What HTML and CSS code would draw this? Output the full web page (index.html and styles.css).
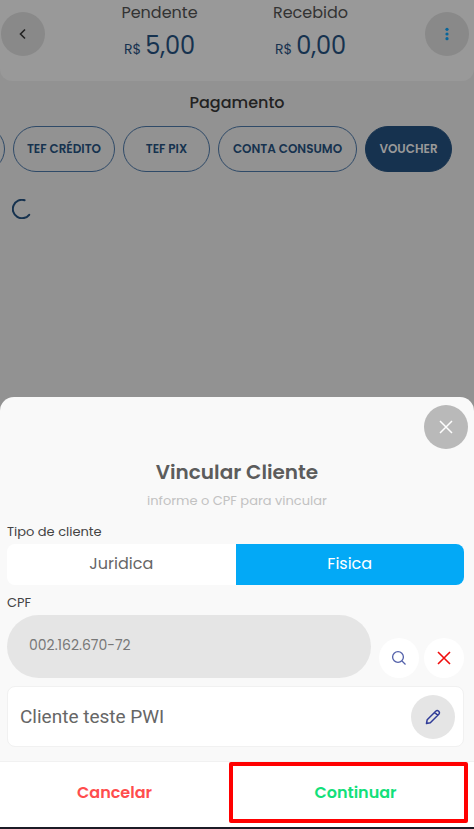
FILE: index.html
```html
<!DOCTYPE html>
<html lang="pt-BR">
<head>
<meta charset="utf-8">
<meta name="viewport" content="width=device-width, initial-scale=1">
<title>Pagamento</title>
<link rel="stylesheet" href="styles.css">
</head>
<body>
<div class="app">
  <header class="topbar">
    <button class="round topbar-btn" type="button" aria-label="Voltar">
      <svg width="16" height="16" viewBox="0 0 16 16" fill="none" stroke="#222" stroke-width="1.6"><path d="M10 3.5 5.5 8l4.5 4.5"/></svg>
    </button>
    <div class="totals">
      <div class="total"><span class="total-name">Pendente</span><span class="total-value"><small>R$</small>5,00</span></div>
      <div class="total"><span class="total-name">Recebido</span><span class="total-value"><small>R$</small>0,00</span></div>
    </div>
    <button class="round topbar-btn" type="button" aria-label="Mais">
      <svg width="16" height="16" viewBox="0 0 16 16" fill="#08659a"><circle cx="8" cy="3.3" r="1.6"/><circle cx="8" cy="8" r="1.6"/><circle cx="8" cy="12.7" r="1.6"/></svg>
    </button>
  </header>
  <main class="payment">
    <h1 class="payment-title">Pagamento</h1>
    <div class="methods">
      <span class="method method-cut" aria-hidden="true"></span>
      <button class="method method-m" type="button">TEF CRÉDITO</button>
      <button class="method method-s" type="button">TEF PIX</button>
      <button class="method method-l" type="button">CONTA CONSUMO</button>
      <button class="method method-s method-on" type="button">VOUCHER</button>
    </div>
    <svg class="spinner" width="20" height="20" viewBox="0 0 20 20" fill="none" stroke="#16324f" stroke-width="2" stroke-linecap="round"><path d="M12.6 1.2A9.2 9.2 0 1 0 17.2 15.8"/></svg>
  </main>
  <section class="sheet" role="dialog" aria-labelledby="sheet-title">
    <div class="sheet-top">
      <button class="round close" type="button" aria-label="Fechar">
        <svg width="16" height="16" viewBox="0 0 16 16" fill="none" stroke="#fff" stroke-width="1.5"><path d="m2 2 12 12M14 2 2 14"/></svg>
      </button>
    </div>
    <h2 class="sheet-title" id="sheet-title">Vincular Cliente</h2>
    <p class="sheet-hint">informe o CPF para vincular</p>
    <div class="form">
      <span class="label" id="type-label">Tipo de cliente</span>
      <div class="segments" role="group" aria-labelledby="type-label">
        <button class="segment" type="button" aria-pressed="false">Juridica</button>
        <button class="segment segment-on" type="button" aria-pressed="true">Fisica</button>
      </div>
      <label class="label" for="cpf">CPF</label>
      <div class="cpf-row">
        <input class="cpf" id="cpf" type="text" value="002.162.670-72">
        <button class="round action" type="button" aria-label="Buscar">
          <svg width="16" height="16" viewBox="0 0 16 16" fill="none" stroke="#5361aa" stroke-width="1.3"><circle cx="7" cy="7" r="5.4"/><path d="m11 11 3.5 3.5"/></svg>
        </button>
        <button class="round action" type="button" aria-label="Limpar">
          <svg width="16" height="16" viewBox="0 0 16 16" fill="none" stroke="#f00d0d" stroke-width="1.6"><path d="m2 2 12 12M14 2 2 14"/></svg>
        </button>
      </div>
      <div class="client">
        <span class="client-name">Cliente teste PWI</span>
        <button class="round edit" type="button" aria-label="Editar">
          <svg width="16" height="16" viewBox="0 0 16 16" fill="none" stroke="#303c98" stroke-width="1.5" stroke-linejoin="round"><path d="M1.5 14.5 2.2 10.7 10.7 2.2A2.2 2.2 0 0 1 13.8 5.3L5.3 13.8ZM9.6 3.3 12.7 6.4"/></svg>
        </button>
      </div>
    </div>
    <footer class="footer">
      <button class="choice cancel" type="button">Cancelar</button>
      <button class="choice continue" type="button">Continuar</button>
    </footer>
  </section>
</div>
</body>
</html>
```

FILE: styles.css
```css
* { box-sizing: border-box; }
body { margin: 0; font-family: Poppins, Inter, sans-serif; background: #929292; }
button, input { font: inherit; border: 0; margin: 0; padding: 0; }
h1, h2, p { margin: 0; }
svg { display: block; }

.app { min-height: 100vh; display: flex; flex-direction: column; }
.round { display: grid; place-items: center; flex: none; width: 44px; height: 44px; border-radius: 50%; }

.topbar { display: flex; align-items: flex-start; height: 81px; padding: 0 5px 0 1px; background: #999; border-radius: 0 0 12px 12px; }
.topbar-btn { margin-top: 12px; background: #898989; }
.totals { flex: 1; display: flex; justify-content: center; }
.total { display: flex; flex-direction: column; align-items: center; width: 151px; }
.total-name { font-size: 16px; line-height: 26px; color: #333; }
.total-value { display: flex; align-items: baseline; gap: 4px; font-size: 24px; line-height: 40px; color: #16324f; }
.total-value small { font-size: 14px; }

.payment { flex: 1; overflow: hidden; }
.payment-title { padding-top: 10px; font-size: 16px; line-height: 24px; font-weight: 500; text-align: center; color: #222; }
.methods { display: flex; justify-content: flex-end; gap: 8px; margin-top: 11px; padding-right: 22px; }
.method { flex: none; height: 46px; border: 1px solid #2f4a68; border-radius: 23px; background: none; color: #16324f; font-size: 12px; font-weight: 600; }
.method-cut { width: 60px; }
.method-s { width: 87px; }
.method-m { width: 102px; }
.method-l { width: 139px; }
.method-on { background: #16324f; border-color: #16324f; color: #999; }
.spinner { margin: 27px 0 0 12px; }

.sheet { background: #f9f9f9; border-radius: 14px 14px 0 0; border-bottom: 2px solid #1c1b26; }
.sheet-top { display: flex; justify-content: flex-end; padding: 8px 6px 0; }
.close { background: #b9b9b9; }
.sheet-title { margin-top: 8px; font-size: 20px; line-height: 30px; font-weight: 600; text-align: center; color: #5c5c5c; }
.sheet-hint { margin-top: 4px; font-size: 13px; line-height: 20px; text-align: center; color: #c2c2c2; }
.form { padding: 11px 10px 14px 7px; }
.label { display: block; font-size: 13px; line-height: 20px; color: #444; }
.segments { display: flex; height: 41px; margin: 2px 0 8px; border-radius: 8px; overflow: hidden; }
.segment { flex: 1; padding-bottom: 2px; background: #fff; color: #666; font-size: 16px; }
.segment-on { background: #03a9f6; color: #fff; }
.cpf-row { display: flex; align-items: flex-end; gap: 5px; margin-top: 2px; }
.cpf { flex: 1; min-width: 0; height: 63px; margin-right: 3px; padding: 0 22px 2px; border-radius: 32px; background: #e5e5e5; color: #777; font-size: 14px; }
.action { width: 40px; height: 40px; background: #fff; }
.client { display: flex; align-items: center; justify-content: space-between; height: 61px; margin-top: 8px; padding: 0 8px 0 12px; background: #fff; border: 1px solid #f1f1f1; border-radius: 8px; }
.client-name { font-family: Roboto, sans-serif; font-size: 19px; color: #666; }
.edit { background: #e5e5e5; }
.footer { display: grid; grid-template-columns: 229fr 239fr; height: 66px; padding: 0 6px 4px 0; background: #fff; border-top: 1px solid #f1f1f1; }
.choice { background: #fff; font-size: 16px; font-weight: 600; }
.cancel { color: #ff4d4d; }
.continue { padding-left: 14px; border: 4px solid #f00; border-radius: 2px; color: #12e07a; }
```
